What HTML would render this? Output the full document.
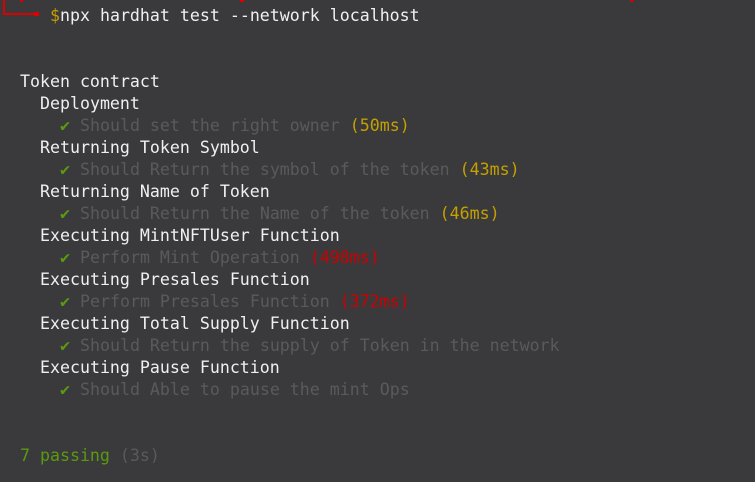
<!DOCTYPE html>
<html><head><style>
html,body{margin:0;padding:0;}
body{width:755px;height:482px;background:#3a3a3c;overflow:hidden;position:relative;font-family:"DejaVu Sans Mono","Liberation Mono",monospace;font-size:16.6px;}
.l{position:absolute;white-space:pre;line-height:22px;color:#f0f0f0;}
.g{color:#5a5a5a}.c{color:#5a9a10}.y{color:#c4a000}.r{color:#cc0000}.gr{color:#5a9a10}
</style></head><body>
<div style="position:absolute;left:3px;top:0;width:2px;height:15px;background:#d00"></div>
<div style="position:absolute;left:3px;top:13px;width:34px;height:2px;background:#d00"></div>
<div style="position:absolute;left:34px;top:12px;width:5px;height:4px;background:#d00"></div>
<div style="position:absolute;left:20px;top:0;width:3px;height:2px;background:#d00"></div>
<div style="position:absolute;left:240px;top:0;width:4px;height:2px;background:#d00"></div>
<div style="position:absolute;left:630px;top:0;width:3px;height:2px;background:#d00"></div>
<div class="l" style="left:50px;top:5px"><span class="y">$</span>npx hardhat test --network localhost</div>
<div class="l" style="left:20px;top:71px">Token contract</div>
<div class="l" style="left:40px;top:93px">Deployment</div>
<div class="l" style="left:60px;top:115px"><span class="c">✔</span> <span class="g">Should set the right owner</span> <span class="y">(50ms)</span></div>
<div class="l" style="left:40px;top:137px">Returning Token Symbol</div>
<div class="l" style="left:60px;top:159px"><span class="c">✔</span> <span class="g">Should Return the symbol of the token</span> <span class="y">(43ms)</span></div>
<div class="l" style="left:40px;top:181px">Returning Name of Token</div>
<div class="l" style="left:60px;top:203px"><span class="c">✔</span> <span class="g">Should Return the Name of the token</span> <span class="y">(46ms)</span></div>
<div class="l" style="left:40px;top:225px">Executing MintNFTUser Function</div>
<div class="l" style="left:60px;top:247px"><span class="c">✔</span> <span class="g">Perform Mint Operation</span> <span class="r">(498ms)</span></div>
<div class="l" style="left:40px;top:269px">Executing Presales Function</div>
<div class="l" style="left:60px;top:291px"><span class="c">✔</span> <span class="g">Perform Presales Function</span> <span class="r">(372ms)</span></div>
<div class="l" style="left:40px;top:313px">Executing Total Supply Function</div>
<div class="l" style="left:60px;top:335px"><span class="c">✔</span> <span class="g">Should Return the supply of Token in the network</span></div>
<div class="l" style="left:40px;top:357px">Executing Pause Function</div>
<div class="l" style="left:60px;top:379px"><span class="c">✔</span> <span class="g">Should Able to pause the mint Ops</span></div>
<div class="l" style="left:20px;top:445px"><span class="gr">7 passing</span> <span class="g">(3s)</span></div>
</body></html>
